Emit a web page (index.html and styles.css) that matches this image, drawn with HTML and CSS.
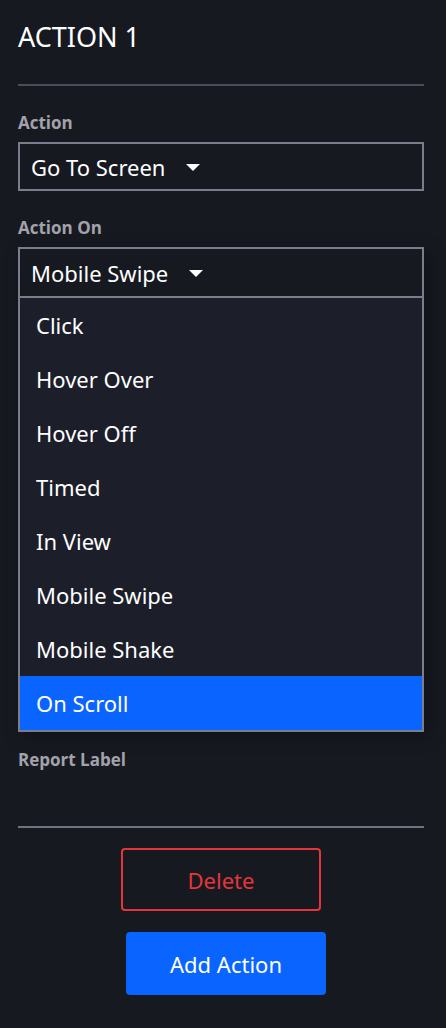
FILE: index.html
```html
<!DOCTYPE html>
<html lang="en">
<head>
    <meta charset="UTF-8">
    <meta name="viewport" content="width=device-width, initial-scale=1.0">
    <title>Action 1</title>
    <link rel="stylesheet" href="styles.css">
</head>
<body>
    <div class="panel">
        <h1 class="panel-title">ACTION 1</h1>
        <hr class="divider divider-top">

        <label class="field-label">Action</label>
        <div class="select">
            <span>Go To Screen</span>
            <span class="caret"></span>
        </div>

        <label class="field-label">Action On</label>
        <div class="select-wrap">
            <div class="select select-open">
                <span>Mobile Swipe</span>
                <span class="caret"></span>
            </div>
            <ul class="options">
                <li>Click</li>
                <li>Hover Over</li>
                <li>Hover Off</li>
                <li>Timed</li>
                <li>In View</li>
                <li>Mobile Swipe</li>
                <li>Mobile Shake</li>
                <li class="active">On Scroll</li>
            </ul>
        </div>

        <label class="field-label report-label">Report Label</label>
        <hr class="divider divider-bottom">

        <div class="buttons">
            <button class="btn btn-delete">Delete</button>
            <button class="btn btn-add">Add Action</button>
        </div>
    </div>
</body>
</html>
```

FILE: styles.css
```css
body {
    margin: 0;
    background: #171921;
    color: #fff;
    font-family: "Noto Sans", "Open Sans", sans-serif;
}
.panel {
    padding: 18px 22px 0 18px;
}
.panel-title {
    margin: 0;
    font-size: 27px;
    font-weight: 400;
    line-height: 38px;
}
.divider {
    border: none;
    height: 2px;
    margin: 0;
}
.divider-top {
    background: #4b4d5c;
    margin-top: 28px;
}
.divider-bottom {
    background: #6f7180;
    margin-top: 56px;
}
.field-label {
    display: block;
    font-family: "Open Sans", "Noto Sans", sans-serif;
    font-size: 17px;
    font-weight: 700;
    color: #a2a3aa;
    line-height: 20px;
    margin-top: 27px;
    margin-bottom: 9px;
}
.select {
    display: flex;
    align-items: center;
    gap: 21px;
    height: 45px;
    border: 2px solid #7b7d8c;
    padding: 0 11px;
    font-size: 22px;
}
.caret {
    width: 0;
    height: 0;
    border-left: 7px solid transparent;
    border-right: 7px solid transparent;
    border-top: 7px solid #fff;
    margin-top: 2px;
}
.select-wrap {
    box-shadow: 4px 4px 16px rgba(0, 0, 0, 0.35);
}
.select-open {
    border-bottom: none;
    height: 47px;
}
.options {
    list-style: none;
    margin: 0;
    padding: 0;
    border: 2px solid #7b7d8c;
    background: #1c1e2a;
}
.options li {
    height: 54px;
    line-height: 54px;
    padding-left: 16px;
    font-size: 22px;
}
.options li.active {
    background: #0a64ff;
}
.report-label {
    margin-top: 18px;
    margin-bottom: 0;
}
.buttons {
    display: flex;
    flex-direction: column;
    align-items: center;
    gap: 21px;
    margin-top: 20px;
}
.btn {
    width: 200px;
    height: 63px;
    border-radius: 4px;
    font-family: inherit;
    font-size: 22px;
    cursor: pointer;
}
.btn-delete {
    background: transparent;
    border: 2px solid #e5353b;
    color: #e5353b;
}
.btn-add {
    background: #0a64ff;
    border: none;
    color: #fff;
    margin-left: 10px;
}
```
